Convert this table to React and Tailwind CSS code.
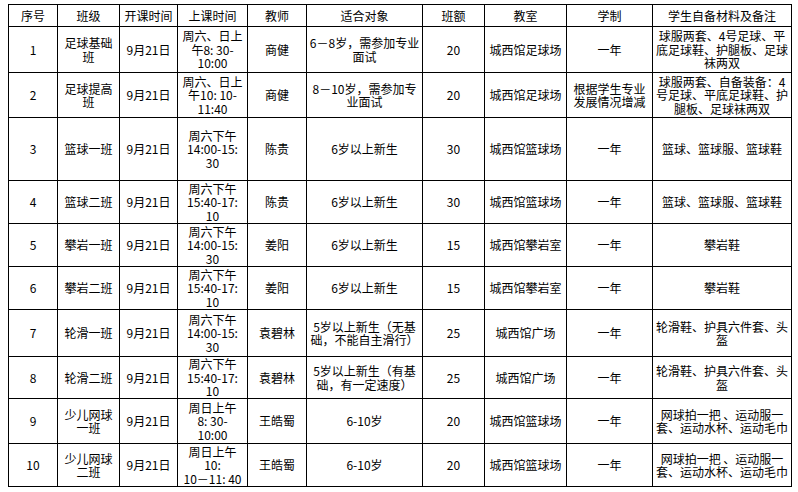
import React from 'react';

const cols = ['序号', '班级', '开课时间', '上课时间', '教师', '适合对象', '班额', '教室', '学制', '学生自备材料及备注'];

const rows = [
  {
    h: 'h-[46px]',
    cells: [['1'], ['足球基础', '班'], ['9月21日'], ['周六、日上', '午8: 30-', '10:00'], ['商健'], ['6－8岁，需参加专业', '面试'], ['20'], ['城西馆足球场'], ['一年'], ['球服两套、4号足球、平', '底足球鞋、护腿板、足球', '袜两双']],
  },
  {
    h: 'h-[45px]',
    cells: [['2'], ['足球提高', '班'], ['9月21日'], ['周六、日上', '午10: 10-', '11:40'], ['商健'], ['8－10岁，需参加专', '业面试'], ['20'], ['城西馆足球场'], ['根据学生专业', '发展情况增减'], ['球服两套、自备装备：4', '号足球、平底足球鞋、护', '腿板、足球袜两双']],
  },
  {
    h: 'h-[63px]',
    cells: [['3'], ['篮球一班'], ['9月21日'], ['周六下午', '14:00-15:', '30'], ['陈贵'], ['6岁以上新生'], ['30'], ['城西馆篮球场'], ['一年'], ['篮球、篮球服、篮球鞋']],
  },
  {
    h: 'h-[43px]',
    cells: [['4'], ['篮球二班'], ['9月21日'], ['周六下午', '15:40-17:', '10'], ['陈贵'], ['6岁以上新生'], ['30'], ['城西馆篮球场'], ['一年'], ['篮球、篮球服、篮球鞋']],
  },
  {
    h: 'h-[43px]',
    cells: [['5'], ['攀岩一班'], ['9月21日'], ['周六下午', '14:00-15:', '30'], ['姜阳'], ['6岁以上新生'], ['15'], ['城西馆攀岩室'], ['一年'], ['攀岩鞋']],
  },
  {
    h: 'h-[43px]',
    cells: [['6'], ['攀岩二班'], ['9月21日'], ['周六下午', '15:40-17:', '10'], ['姜阳'], ['6岁以上新生'], ['15'], ['城西馆攀岩室'], ['一年'], ['攀岩鞋']],
  },
  {
    h: 'h-[47px]',
    cells: [['7'], ['轮滑一班'], ['9月21日'], ['周六下午', '14:00-15:', '30'], ['袁碧林'], ['5岁以上新生（无基', '础，不能自主滑行）'], ['25'], ['城西馆广场'], ['一年'], ['轮滑鞋、护具六件套、头', '盔']],
  },
  {
    h: 'h-[42px]',
    cells: [['8'], ['轮滑二班'], ['9月21日'], ['周六下午', '15:40-17:', '10'], ['袁碧林'], ['5岁以上新生（有基', '础，有一定速度）'], ['25'], ['城西馆广场'], ['一年'], ['轮滑鞋、护具六件套、头', '盔']],
  },
  {
    h: 'h-[45px]',
    cells: [['9'], ['少儿网球', '一班'], ['9月21日'], ['周日上午', '8: 30-', '10:00'], ['王皓蜀'], ['6-10岁'], ['20'], ['城西馆篮球场'], ['一年'], ['网球拍一把 、运动服一', '套、运动水杯、运动毛巾']],
  },
  {
    h: 'h-[43px]',
    cells: [['10'], ['少儿网球', '二班'], ['9月21日'], ['周日上午', '10:', '10－11: 40'], ['王皓蜀'], ['6-10岁'], ['20'], ['城西馆篮球场'], ['一年'], ['网球拍一把 、运动服一', '套、运动水杯、运动毛巾']],
  },
];

const Cell = ({ lines, className = '' }) => (
  <div className={`flex flex-col items-center justify-center border-r border-b border-black text-center whitespace-nowrap ${className}`}>
    {lines.map((l, i) => (
      <span key={i}>{l}</span>
    ))}
  </div>
);

export default function App() {
  return (
    <div className="w-[798px] h-[492px] bg-white overflow-hidden pt-[4px] pl-[8px]">
      <div
        className="grid grid-cols-[49px_62px_58px_70px_59px_116px_62px_82px_86px_139px] w-[784px] border-t border-l border-black text-[12px] leading-[13.5px] text-black"
        style={{ fontFamily: '"Noto Sans CJK SC", "Liberation Sans", sans-serif' }}
      >
        {cols.map((c) => (
          <Cell key={c} lines={[c]} className="h-[22px]" />
        ))}
        {rows.map((r, ri) =>
          r.cells.map((lines, ci) => <Cell key={`${ri}-${ci}`} lines={lines} className={r.h} />)
        )}
      </div>
    </div>
  );
}
